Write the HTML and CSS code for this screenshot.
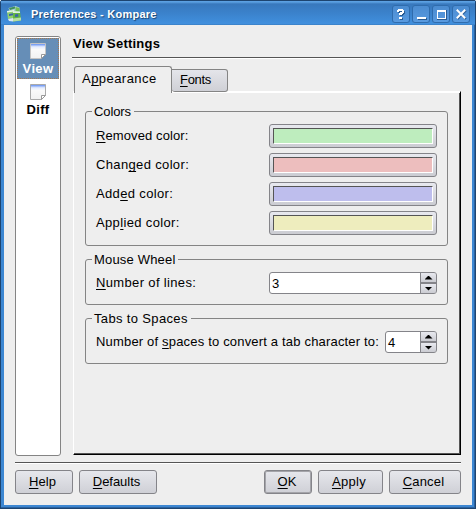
FILE: index.html
```html
<!DOCTYPE html>
<html lang="en">
<head>
<meta charset="utf-8">
<title>Preferences - Kompare</title>
<link rel="stylesheet" href="styles.css">
</head>
<body>
<div class="window">
  <header class="titlebar">
    <svg class="app-icon" width="16" height="16" viewBox="0 0 16 16">
      <path d="M1.500 2l7-2 4 1.500v5l-9 2z" fill="#a8cfd6"/>
      <path d="M2 2l6-1.500v2L3 4z" fill="#3f8f5c"/>
      <path d="M8.500 1l4 1v3l-4 .5z" fill="#74bd54"/>
      <path d="M0 5l7-1v8l-6 1z" fill="#8fd06b"/>
      <path d="M0 5l7-1v1.500l-7 1z" fill="#e4f4ea"/>
      <path d="M2 8l4-.7v2L2 10z" fill="#3a63a8"/>
      <path d="M6 5l7 .5 1 9-8 1z" fill="#62b544"/>
      <path d="M6 5l7 .5v1.500L6 7z" fill="#dff2e4"/>
      <path d="M8 8.500l3-.5.5 2.500-3.500.5z" fill="#3a63a8"/>
      <path d="M6 12.500l8-1v3l-8 1z" fill="#b6dfa4"/>
      <path d="M1 13l5-1v3.500l-4-.5z" fill="#dbe7ef"/>
    </svg>
    <h1 class="title">Preferences - Kompare</h1>
    <div class="controls">
      <span class="control"><svg width="18" height="18" viewBox="0 0 18 18" shape-rendering="crispEdges"><path class="sh" d="M6 6h2V5h3v1h2v3h-1v1h-1v1H8V9h1V8h1V7H8v1H6zM8 13h3v2H8z"/><path class="fg" d="M5 5h1V4h5v1h1v3h-1v1h-1v1H7V8h1V7h2V6H7v1H5zM7 12h3v2H7z"/></svg></span>
      <span class="control"><svg width="18" height="18" viewBox="0 0 18 18" shape-rendering="crispEdges"><path class="sh" d="M6 13h9v2H6z"/><path class="fg" d="M5 12h9v2H5z"/></svg></span>
      <span class="control"><svg width="18" height="18" viewBox="0 0 18 18" shape-rendering="crispEdges"><path class="sh" fill-rule="evenodd" d="M5 5h10v10H5zM6 7v7h8V7z"/><path class="fg" fill-rule="evenodd" d="M5 5h9v9H5zM6 7v6h7V7z"/></svg></span>
      <span class="control"><svg width="18" height="18" viewBox="0 0 18 18"><path class="shl" d="M5.500 5.500l8.500 8.500m0-8.500l-8.500 8.500"/><path class="fgl" d="M4.800 4.800l8.400 8.400m0-8.400l-8.400 8.400"/></svg></span>
    </div>
  </header>
  <main class="body">
    <div class="content">
      <nav class="pages">
        <div class="page selected">
          <svg width="16" height="16" viewBox="0 0 16 16"><defs><linearGradient id="paper" x2="0" y2="1"><stop offset="0" stop-color="#4d80f0"/><stop offset=".22" stop-color="#e4ecff"/><stop offset=".4" stop-color="#fafafa"/><stop offset="1" stop-color="#f2f2f2"/></linearGradient></defs><path d="M.5.5h15v11l-4 4H.5z" fill="url(#paper)" stroke="#c4c4c4"/><path d="M11.500 15.500v-4h4z" fill="#fff" stroke="#999"/></svg>
          <span>View</span>
        </div>
        <div class="page">
          <svg width="16" height="16" viewBox="0 0 16 16"><path d="M.5.5h15v11l-4 4H.5z" fill="url(#paper)" stroke="#aaa"/><path d="M11.500 15.500v-4h4z" fill="#fff" stroke="#999"/></svg>
          <span>Diff</span>
        </div>
      </nav>
      <section class="settings">
        <h2 class="heading">View Settings</h2>
        <div class="rule"></div>
        <div class="tabs">
          <div class="tab active">A<u>p</u>pearance</div>
          <div class="tab"><u>F</u>onts</div>
        </div>
        <div class="pane">
          <section class="group colors">
            <h3>Colors</h3>
            <div class="row"><label class="tight"><u>R</u>emoved color:</label><button class="swatch"><i class="green"></i></button></div>
            <div class="row"><label>Chan<u>g</u>ed color:</label><button class="swatch"><i class="red"></i></button></div>
            <div class="row"><label>Add<u>e</u>d color:</label><button class="swatch"><i class="blue"></i></button></div>
            <div class="row"><label>App<u>l</u>ied color:</label><button class="swatch"><i class="yellow"></i></button></div>
          </section>
          <section class="group">
            <h3 class="snug">Mouse Wheel</h3>
            <div class="row"><label><u>N</u>umber of lines:</label>
              <div class="spin wide"><span>3</span><div class="steps"><b class="up"></b><b class="down"></b></div></div></div>
          </section>
          <section class="group">
            <h3>Tabs to Spaces</h3>
            <div class="row"><label class="even">Number of <u>s</u>paces to convert a tab character to:</label>
              <div class="spin"><span>4</span><div class="steps"><b class="up"></b><b class="down"></b></div></div></div>
          </section>
        </div>
      </section>
    </div>
    <div class="rule"></div>
    <footer class="buttons">
      <button class="btn help"><u>H</u>elp</button>
      <button class="btn defaults"><u>D</u>efaults</button>
      <button class="btn ok"><u>O</u>K</button>
      <button class="btn apply"><u>A</u>pply</button>
      <button class="btn cancel"><u>C</u>ancel</button>
    </footer>
  </main>
</div>
</body>
</html>
```
FILE: styles.css
```css
* { box-sizing: border-box; }
body {
  margin: 0;
  font: 13px/16px "Liberation Sans", Arial, sans-serif;
  letter-spacing: 0.35px;
  color: #000;
}
h1, h2, h3 { margin: 0; font-size: 13px; }
u { text-underline-offset: 2px; text-decoration-thickness: 1px; text-decoration-skip-ink: none; }
button { font: inherit; letter-spacing: inherit; color: inherit; padding: 0; }
.tight { letter-spacing: 0.1px; }
.snug { letter-spacing: 0.18px; }
.even { letter-spacing: 0.18px; }

.window {
  width: 476px;
  height: 509px;
  padding: 0 4px 4px;
  background: #3d87d2;
  border-radius: 3px 3px 0 0;
  box-shadow: inset 1px 1px #1d4470, inset -1px -1px #1d4470, inset -2px -2px #2a62a0;
}
.titlebar {
  display: flex;
  align-items: center;
  height: 25px;
  margin: 0 -3px;
  padding: 2px 5px 0 6px;
  background: linear-gradient(#1d4470 0 1px, #5ba0e2 1px 2px, #3878bd 4px, #3b83cd 14px, #4190de 24px, #3577b9 25px);
}
.title { margin-left: 8px; color: #fff; font-size: 11px; text-shadow: 1px 1px 1px #1c4472; letter-spacing: 0.25px; }
.controls { display: flex; gap: 2px; margin-left: auto; }
.control { width: 18px; height: 18px; border-radius: 3px; background: linear-gradient(#4a8bd0, #5a9be0); box-shadow: 0 0 0 1px #2f6cad inset; }
.control svg { display: block; }
.fg { fill: #fff; } .sh { fill: #295b92; }
.fgl { stroke: #fff; stroke-width: 2; } .shl { stroke: #295b92; stroke-width: 2; }

.body { height: 480px; padding: 11px 11px 0; background: #eee; }
.content { display: flex; height: 420px; margin-bottom: 6px; }
.pages {
  width: 46px;
  margin-right: 11px;
  padding: 1px;
  border: 1px solid #848484;
  border-radius: 3px;
  background: #fff;
}
.page { display: flex; flex-direction: column; align-items: center; height: 41px; padding-top: 4px; font-weight: bold; }
.page svg { margin-top: 1px; }
.page span { margin-top: 2px; }
.selected { color: #fff; background: #668eb7; outline: 1px dotted #a57850; outline-offset: -1px; }

.settings { width: 389px; }
.heading { height: 21px; padding-left: 1px; letter-spacing: 0.22px; }
.rule { height: 2px; border-top: 1px solid #555; border-bottom: 1px solid #fff; }
.settings .rule { margin-bottom: 7px; }
.tabs { display: flex; align-items: flex-start; height: 25px; margin-left: 2px; }
.tab { width: 56px; height: 23px; margin-top: 3px; padding: 2px 0 0 8px; border: 1px solid #848484; border-left: 0; border-radius: 0 3px 3px 3px; background: linear-gradient(#e4e5ea, #cfd0d6); letter-spacing: -0.3px; }
.tab.active { position: relative; width: 98px; height: 27px; margin-top: 0; padding: 4px 0 0 7px; border: 1px solid #848484; border-bottom: 0; border-radius: 3px 3px 0 0; background: #eee; letter-spacing: 0.45px; }
.pane { height: 364px; margin-left: 1px; padding: 19px 12px 0 11px; border: 1px solid; border-color: #fff #000 #000 #fff; box-shadow: inset 0 1px #fff, inset -1px -1px #555; }

.group { height: 46px; margin-bottom: 13px; border: 1px solid #848484; border-radius: 3px; }
.group.colors { height: 135px; }
.group h3 { width: max-content; height: 12px; margin: -8px 0 0 6px; padding: 0 3px 0 2px; font-weight: normal; background: #eee; }
.colors h3 { letter-spacing: -0.1px; }
.row { display: flex; justify-content: space-between; align-items: center; height: 24px; margin: 7px 10px 5px; white-space: nowrap; }
.colors .row { margin-top: 8px; }
.colors .row + .row { margin-top: 0; }
.swatch { width: 168px; height: 24px; padding: 3px; border: 1px solid #848489; border-radius: 3px; background: linear-gradient(#e8e9ef, #cbccd2); }
.swatch i { display: block; height: 16px; border: 1px solid; border-color: #555 #fff #fff #555; }
.green { background: #beedbe; } .red { background: #edbebe; } .blue { background: #bebeed; } .yellow { background: #eeedbe; }
.spin { display: flex; width: 52px; height: 22px; border: 1px solid #848489; border-radius: 3px; background: #fff; overflow: hidden; }
.spin.wide { width: 168px; }
.spin span { flex: 1; padding: 3px 0 0 2px; }
.steps { display: grid; grid-template-rows: 9px 9px; gap: 2px; width: 16px; border-left: 1px solid #848489; background: #848489; }
.steps b { display: grid; place-items: center; background: linear-gradient(#e8e9ef, #cbccd2); }
.steps b::after { content: ""; width: 8px; height: 4px; background: #000; }
.up::after { clip-path: polygon(50% 0, 100% 100%, 0 100%); }
.down::after { clip-path: polygon(0 0, 100% 0, 50% 100%); }

.buttons { display: flex; gap: 6px; margin-top: 6px; }
.btn { height: 24px; border: 1px solid #848489; border-radius: 3px; background: linear-gradient(#e6e7ec, #cfd0d6); }
.help { width: 58px; padding-right: 3px; letter-spacing: 0.1px; }
.defaults { width: 78px; padding-right: 3px; letter-spacing: -0.05px; }
.ok { width: 48px; margin-left: auto; padding-right: 2px; letter-spacing: 0; box-shadow: inset 0 0 0 1px #a4a4a9; }
.apply { width: 65px; padding-right: 3px; letter-spacing: 0.3px; }
.cancel { width: 72px; padding-right: 3px; letter-spacing: 0.2px; }
```
